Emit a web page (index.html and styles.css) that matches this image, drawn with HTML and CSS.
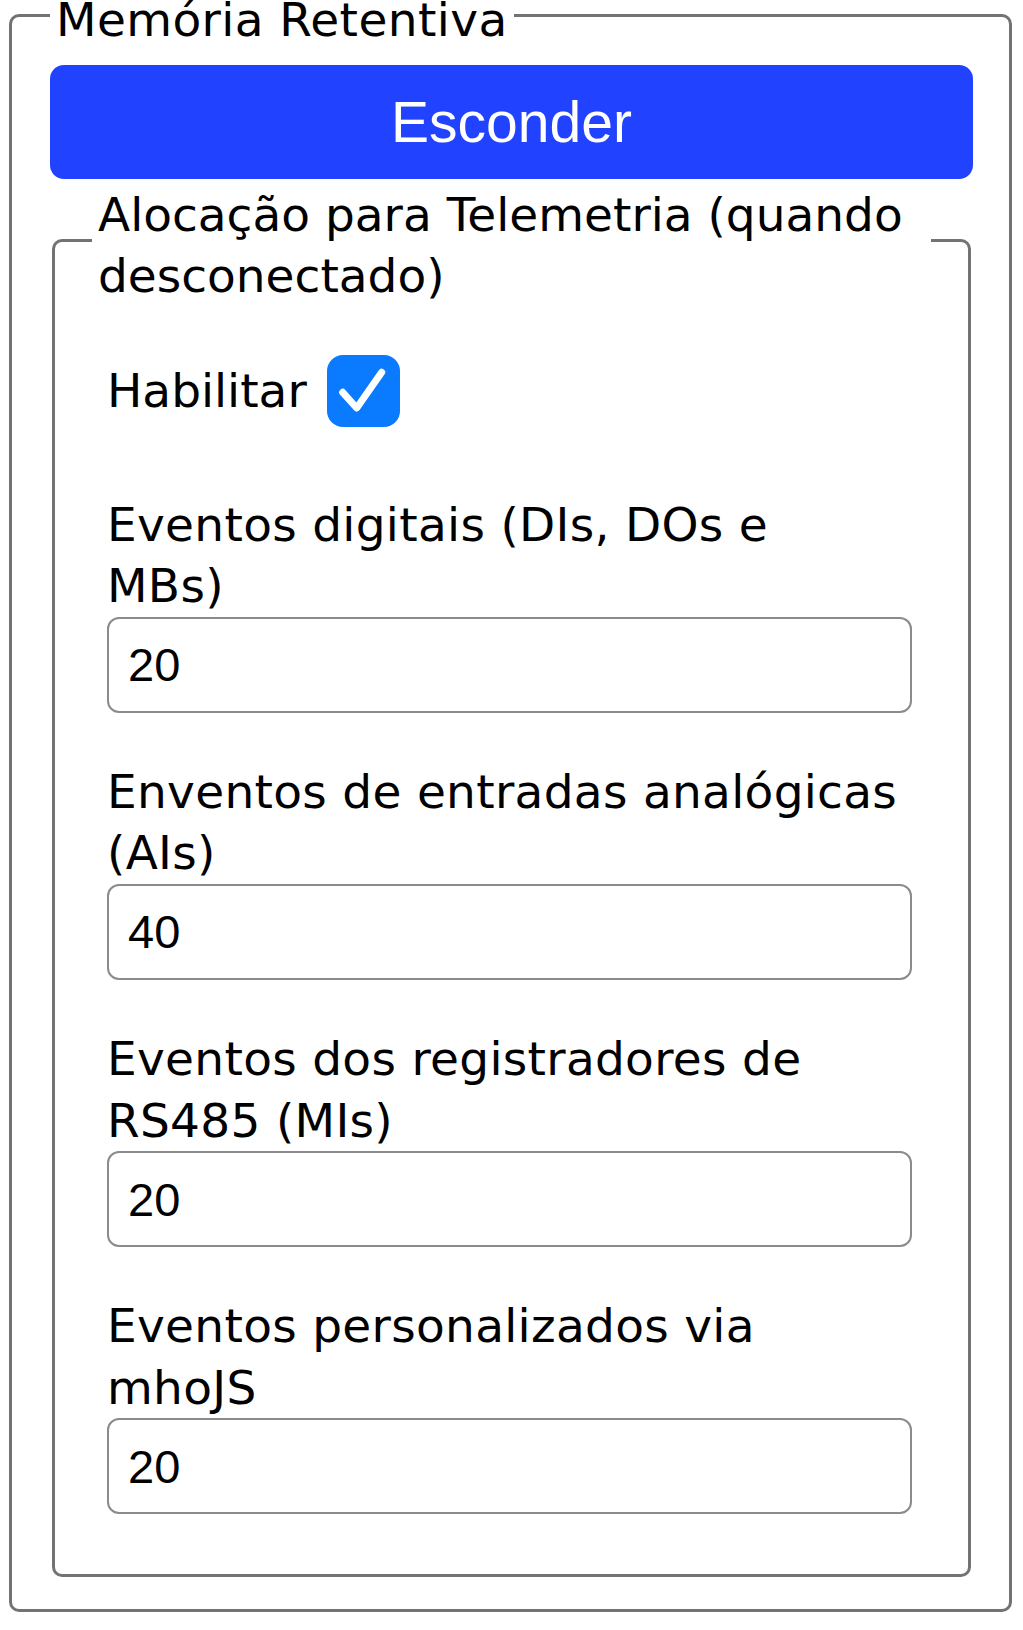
FILE: index.html
```html
<!DOCTYPE html>
<html lang="pt-BR">
<head>
    <meta charset="UTF-8">
    <title>Memória Retentiva</title>
    <link rel="stylesheet" href="styles.css">
</head>
<body>
    <fieldset class="memory">
        <legend>Memória Retentiva</legend>
        <button type="button" class="toggle-btn">Esconder</button>

        <fieldset class="telemetry">
            <legend>Alocação para Telemetria (quando desconectado)</legend>
            <div class="fields">
                <div class="check-row">
                    <span>Habilitar</span>
                    <span class="checkbox">
                        <svg width="73" height="72" viewBox="0 0 73 72">
                            <path d="M15.7 37.3 L29.7 53 L54.7 17.3" fill="none" stroke="#fff" stroke-width="7" stroke-linecap="round" stroke-linejoin="round"/>
                        </svg>
                    </span>
                </div>

                <div class="input-group">
                    <label for="digitalEvents">Eventos digitais (DIs, DOs e<br>MBs)</label>
                    <input type="text" id="digitalEvents" value="20">
                </div>

                <div class="input-group">
                    <label for="analogEvents">Enventos de entradas analógicas (AIs)</label>
                    <input type="text" id="analogEvents" value="40">
                </div>

                <div class="input-group">
                    <label for="registerEvents">Eventos dos registradores de RS485 (MIs)</label>
                    <input type="text" id="registerEvents" value="20">
                </div>

                <div class="input-group">
                    <label for="customEvents">Eventos personalizados via<br>mhoJS</label>
                    <input type="text" id="customEvents" value="20">
                </div>
            </div>
        </fieldset>
    </fieldset>
</body>
</html>
```

FILE: styles.css
```css
body {
    margin: 0;
    font-family: "DejaVu Sans", Verdana, sans-serif;
    font-size: 47px;
    line-height: 1.31;
    color: #000;
    background-color: #fff;
}

fieldset {
    border: 3px solid #737373;
    border-radius: 10px;
    min-width: 0;
}

legend {
    padding: 9px 6px 0;
}

.memory {
    margin: -20px 11px 0 9px;
    padding: 0 36px 32px 38px;
}

.memory > legend {
    letter-spacing: 0.4px;
}

.toggle-btn {
    display: block;
    width: 100%;
    height: 114px;
    margin-top: 14px;
    background-color: #2143ff;
    color: white;
    border: none;
    border-radius: 14px;
    font-family: "Liberation Sans", Arial, sans-serif;
    font-size: 57px;
    cursor: pointer;
}

.telemetry {
    margin: -4px 2px 0;
    padding: 0 37px 60px;
}

.fields {
    padding: 48px 19px 0 15px;
}

.check-row {
    display: flex;
    align-items: center;
    gap: 20px;
    height: 72px;
    margin-bottom: 67px;
}

.checkbox {
    display: flex;
    width: 73px;
    height: 72px;
    background-color: #0a7bff;
    border-radius: 16px;
}

.input-group {
    margin-bottom: 48px;
}

.input-group:last-child {
    margin-bottom: 0;
}

label {
    display: block;
    letter-spacing: 0.3px;
}

input {
    display: block;
    width: 100%;
    height: 96px;
    padding: 0 19px;
    border: 2px solid #8a8a8f;
    border-radius: 12px;
    font-family: "Liberation Sans", Arial, sans-serif;
    font-size: 47px;
    color: #000;
    box-sizing: border-box;
}
```
